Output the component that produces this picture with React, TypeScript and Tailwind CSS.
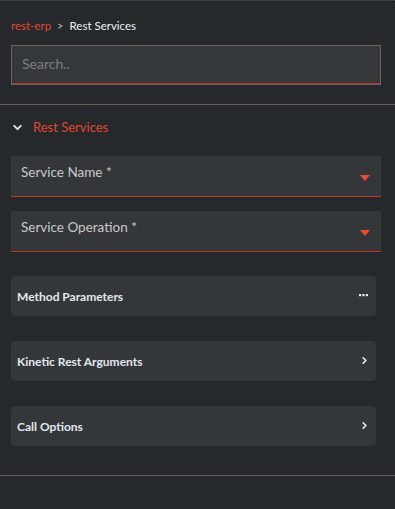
import { ChevronDown, ChevronRight } from "lucide-react";

const font = { fontFamily: 'Lato, "Noto Sans", sans-serif' };

function SelectField({ label }: { label: string }) {
  return (
    <div className="relative h-[41px] w-[370px] bg-[#33373a] border-b border-[#c8321c]">
      <span className="absolute left-[10px] top-[6px] text-[13.5px] text-[#c9c9c9]">{label}</span>
      {/* dropdown caret */}
      <svg className="absolute right-[11px] top-[19px]" width="10" height="6" viewBox="0 0 10 6">
        <path d="M0 0 H10 L5 6 Z" fill="#f0492e" />
      </svg>
    </div>
  );
}

function PanelRow({ title, icon }: { title: string; icon: "dots" | "chevron" }) {
  return (
    <div className="flex h-[40px] w-[365px] items-center justify-between rounded-[4px] bg-[#33373a] pl-[6px] pr-[8px]">
      <span className="pt-[3px] text-[12px] font-bold text-[#e4e8ee]">{title}</span>
      {icon === "dots" ? (
        <svg width="9" height="3" viewBox="0 0 9 3">
          <rect x="0" y="0" width="2.2" height="2.2" fill="#e8eef6" />
          <rect x="3.4" y="0" width="2.2" height="2.2" fill="#e8eef6" />
          <rect x="6.8" y="0" width="2.2" height="2.2" fill="#e8eef6" />
        </svg>
      ) : (
        <ChevronRight size={11} strokeWidth={3.5} color="#e8eef6" className="-mr-[2px]" />
      )}
    </div>
  );
}

export default function App() {
  return (
    <div className="h-[509px] w-[395px] overflow-hidden bg-[#26292b] border-t border-dotted border-[#55585a]" style={font}>
      <div className="flex items-center gap-[6px] pl-[11px] pt-[17px] text-[11.5px] leading-[16px]">
        <span className="text-[#e0472f]">rest-erp</span>
        <span className="text-[#b9bcc0] text-[11px]">&gt;</span>
        <span className="text-[#eef0f6]">Rest Services</span>
      </div>

      <div className="ml-[11px] mt-[11px] h-[40px] w-[370px] border border-[#6b665c] bg-[#34383b] shadow-[inset_0_-1px_0_#b8361f]">
        <input
          placeholder="Search.."
          className="h-full w-full bg-transparent px-[10px] pb-[4px] text-[14px] text-[#c9c9c9] placeholder:text-[#7b7f82] outline-none"
          style={font}
        />
      </div>

      <div className="mt-[19px] h-px w-full bg-[#625d55]" />

      <div className="flex items-center gap-[9px] pl-[11px] pt-[13px]">
        <ChevronDown size={13} strokeWidth={3.5} color="#dbe6ef" />
        <span className="text-[13px] text-[#e0472f]">Rest Services</span>
      </div>

      <div className="mt-[18px] flex flex-col gap-[14px] pl-[11px]">
        <SelectField label="Service Name *" />
        <SelectField label="Service Operation *" />
      </div>

      <div className="mt-[24px] flex flex-col gap-[25px] pl-[11px]">
        <PanelRow title="Method Parameters" icon="dots" />
        <PanelRow title="Kinetic Rest Arguments" icon="chevron" />
        <PanelRow title="Call Options" icon="chevron" />
      </div>

      <div className="mt-[29px] h-px w-full bg-[#625d55]" />
    </div>
  );
}
